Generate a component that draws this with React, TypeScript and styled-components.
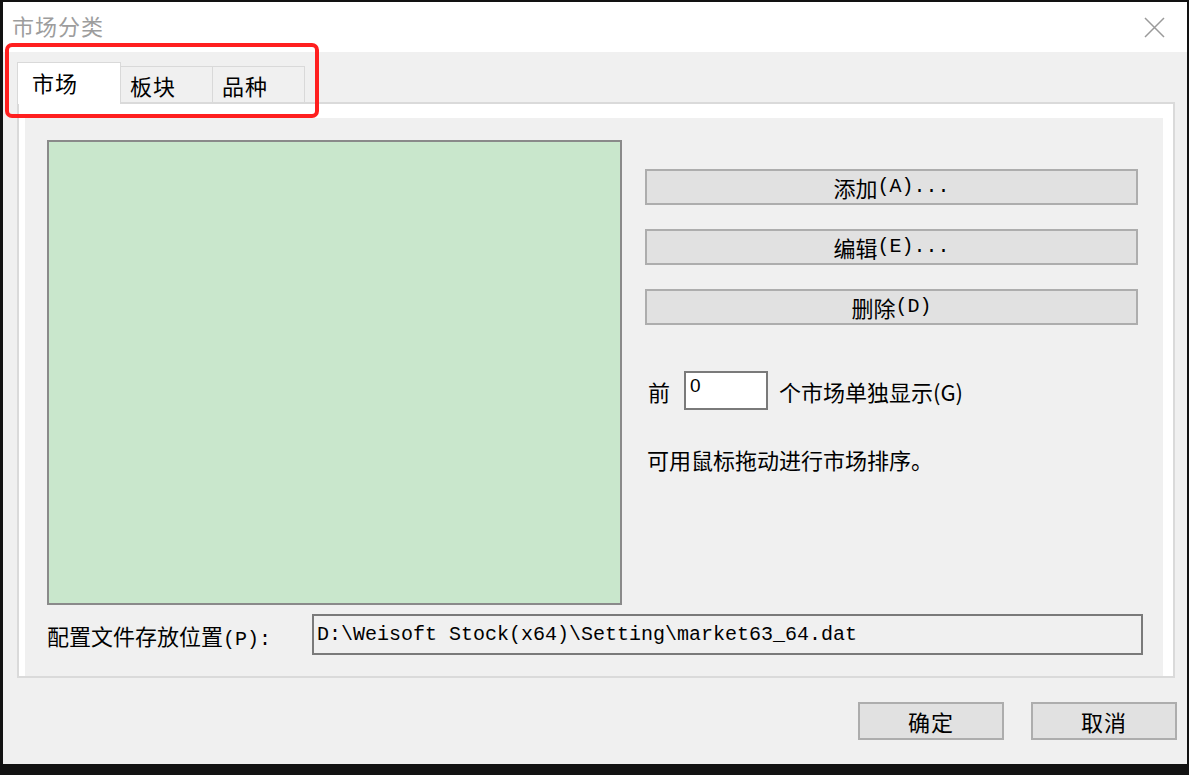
import React from "react";
import styled, { createGlobalStyle } from "styled-components";

const GlobalStyle = createGlobalStyle`
  html, body {
    margin: 0;
    padding: 0;
    background: #121212;
  }
  body {
    width: 1189px;
    height: 775px;
    overflow: hidden;
    font-family: "Noto Sans CJK SC", "Liberation Sans", sans-serif;
    color: #000;
  }
  * { box-sizing: border-box; }
`;

const Window = styled.div`
  position: relative;
  width: 1184px;
  height: 762px;
  margin: 2px 0 0 3px;
  background: #f0f0f0;
  display: flex;
  flex-direction: column;
`;

const TitleBar = styled.div`
  height: 50px;
  background: #fff;
  display: flex;
  align-items: center;
  justify-content: space-between;
  padding: 0 22px 5px 9px;
`;

const Title = styled.span`
  font-size: 22px;
  color: #9d9d9d;
  letter-spacing: 1px;
`;

const CloseBox = styled.div`
  display: flex;
  padding-top: 5px;
`;

const Content = styled.div`
  flex: 1;
  padding: 10px 12px 0 14px;
  display: flex;
  flex-direction: column;
`;

const TabStrip = styled.div`
  display: flex;
  align-items: flex-end;
  height: 40px;
  position: relative;
  z-index: 1;
`;

const Tab = styled.div<{ $active?: boolean; $w: number }>`
  width: ${({ $w }) => $w}px;
  height: ${({ $active }) => ($active ? "42px" : "36px")};
  margin-bottom: ${({ $active }) => ($active ? "-2px" : "0")};
  margin-left: -1px;
  background: ${({ $active }) => ($active ? "#fff" : "#f0f0f0")};
  border: 1px solid #d9d9d9;
  border-bottom: none;
  display: flex;
  align-items: center;
  padding-left: ${({ $active }) => ($active ? "14px" : "9px")};
  padding-bottom: ${({ $active }) => ($active ? "4px" : "0")};
  padding-top: ${({ $active }) => ($active ? "0" : "1px")};
  font-size: 22px;
  letter-spacing: 1px;
  &:first-child { margin-left: 0; }
`;

const Panel = styled.div`
  height: 576px;
  border: 2px solid #dadada;
  background: #fff;
  padding: 14px 10px 0 6px;
`;

const Page = styled.div`
  height: 100%;
  background: #f0f0f0;
  padding: 22px 0 0 22px;
  display: flex;
  flex-direction: column;
`;

const TopArea = styled.div`
  display: flex;
  gap: 23px;
`;

const ListBox = styled.div`
  width: 575px;
  height: 465px;
  background: #c9e7cc;
  border: 2px solid #8a8a8a;
`;

const Side = styled.div`
  width: 493px;
  display: flex;
  flex-direction: column;
  padding-top: 29px;
  gap: 24px;
`;

const ActionButton = styled.div`
  height: 36px;
  background: #e1e1e1;
  border: 2px solid #adadad;
  display: flex;
  align-items: center;
  justify-content: center;
  font-size: 22px;
  padding-bottom: 1px;
`;

const Key = styled.span`
  font-family: "Liberation Mono", "DejaVu Sans Mono", monospace;
  font-size: 20px;
`;

const CountRow = styled.div`
  margin-top: 22px;
  display: flex;
  align-items: center;
  padding-left: 3px;
  font-size: 22px;
`;

const CountInput = styled.div`
  width: 84px;
  height: 39px;
  margin: 0 11px 0 14px;
  background: #fff;
  border: 2px solid #7a7a7a;
  font-family: "Liberation Sans", Arial, sans-serif;
  font-size: 19px;
  padding: 2px 0 0 4px;
`;

const Hint = styled.div`
  margin-top: 9px;
  padding-left: 2px;
  font-size: 22px;
`;

const BottomRow = styled.div`
  margin-top: 9px;
  display: flex;
  align-items: center;
`;

const PathLabel = styled.div`
  width: 265px;
  font-size: 22px;
`;

const PathField = styled.div`
  width: 831px;
  height: 41px;
  background: #f0f0f0;
  border: 2px solid #7a7a7a;
  display: flex;
  align-items: center;
  padding-left: 3px;
  font-family: "Liberation Mono", "DejaVu Sans Mono", monospace;
  font-size: 20px;
`;

const Footer = styled.div`
  display: flex;
  justify-content: flex-end;
  gap: 27px;
  padding-top: 24px;
  margin-right: -2px;
`;

const DialogButton = styled.div`
  width: 146px;
  height: 38px;
  background: #e1e1e1;
  border: 2px solid #adadad;
  display: flex;
  align-items: center;
  justify-content: center;
  font-size: 22px;
  letter-spacing: 1px;
`;

const Highlight = styled.div`
  position: absolute;
  left: 2px;
  top: 41px;
  width: 314px;
  height: 75px;
  border: 4px solid #ff1f1f;
  border-radius: 7px;
  pointer-events: none;
  z-index: 2;
`;

const CloseIcon = () => (
  <svg width="21" height="21" viewBox="0 0 21 21">
    <path d="M1 1 L20 20 M20 1 L1 20" stroke="#9a9a9a" strokeWidth="1.5" fill="none" />
  </svg>
);

const tabs = [
  { label: "市场", w: 104, active: true },
  { label: "板块", w: 93 },
  { label: "品种", w: 93 },
];

export default function App() {
  return (
    <>
      <GlobalStyle />
      <Window>
        <TitleBar>
          <Title>市场分类</Title>
          <CloseBox>
            <CloseIcon />
          </CloseBox>
        </TitleBar>
        <Content>
          <TabStrip>
            {tabs.map((t) => (
              <Tab key={t.label} $active={t.active} $w={t.w}>
                {t.label}
              </Tab>
            ))}
          </TabStrip>
          <Panel>
            <Page>
              <TopArea>
                <ListBox />
                <Side>
                  <ActionButton>
                    添加<Key>(A)...</Key>
                  </ActionButton>
                  <ActionButton>
                    编辑<Key>(E)...</Key>
                  </ActionButton>
                  <ActionButton>
                    删除<Key>(D)</Key>
                  </ActionButton>
                  <CountRow>
                    <span>前</span>
                    <CountInput>0</CountInput>
                    <span>个市场单独显示(G)</span>
                  </CountRow>
                  <Hint>可用鼠标拖动进行市场排序。</Hint>
                </Side>
              </TopArea>
              <BottomRow>
                <PathLabel>
                  配置文件存放位置<Key>(P):</Key>
                </PathLabel>
                <PathField>D:\Weisoft Stock(x64)\Setting\market63_64.dat</PathField>
              </BottomRow>
            </Page>
          </Panel>
          <Footer>
            <DialogButton>确定</DialogButton>
            <DialogButton>取消</DialogButton>
          </Footer>
        </Content>
        <Highlight />
      </Window>
    </>
  );
}
